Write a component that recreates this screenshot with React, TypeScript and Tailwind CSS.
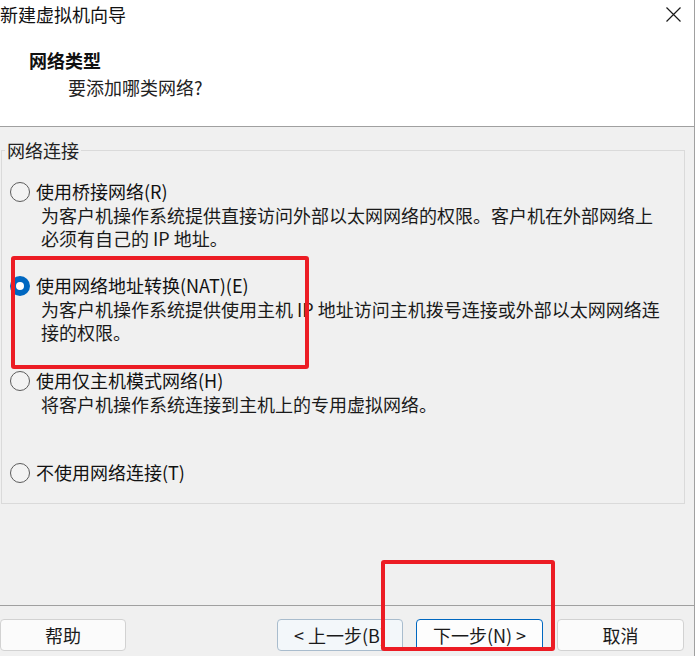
import React from "react";

function Radio({ checked }: { checked?: boolean }) {
  if (checked) {
    return (
      <div className="w-[20px] h-[20px] rounded-full bg-[#0067c0] flex items-center justify-center">
        <div className="w-[8px] h-[8px] rounded-full bg-white" />
      </div>
    );
  }
  return <div className="w-[20px] h-[20px] rounded-full border border-[#5c5c5c] bg-[#f3f3f3]" />;
}

function Option({
  label,
  desc,
  checked,
  className,
}: {
  label: React.ReactNode;
  desc?: string[];
  checked?: boolean;
  className?: string;
}) {
  return (
    <div className={"flex ml-[5px] " + (className ?? "")}>
      <div className="h-[23.5px] flex items-center">
        <Radio checked={checked} />
      </div>
      <div className="ml-[6px]">
        <div className="leading-[23.5px] whitespace-nowrap text-[#111]">{label}</div>
        {desc?.map((d, i) => (
          <div key={i} className="ml-[5px] leading-[23.5px] whitespace-nowrap text-[#1a1a1a]">
            {d}
          </div>
        ))}
      </div>
    </div>
  );
}

function Btn({
  children,
  className,
}: {
  children: React.ReactNode;
  className?: string;
}) {
  return (
    <div
      className={
        "h-[32px] rounded-[4px] border flex items-center justify-center text-[18px] leading-[24px] text-[#1a1a1a] whitespace-nowrap " +
        (className ?? "")
      }
    >
      {children}
    </div>
  );
}

export default function App() {
  return (
    <div className="w-[698px] h-[656px] bg-white relative overflow-hidden font-['Noto_Sans_CJK_SC','Noto_Sans',sans-serif] text-[18px]">
      <div className="w-[695px] h-full border-r border-[#a0a0a0] flex flex-col">
        {/* header */}
        <div className="h-[127px] shrink-0 bg-white border-b border-[#a0a0a0]">
          <div className="flex items-center justify-between h-[28px]">
            <span className="ml-0 leading-[28px] text-[#111]">新建虚拟机向导</span>
            <svg width="15" height="15" viewBox="0 0 15 15" className="mr-[13px]">
              <path d="M0.5 0.5 L14.5 14.5 M14.5 0.5 L0.5 14.5" stroke="#1a1a1a" strokeWidth="1.2" fill="none" />
            </svg>
          </div>
          <div className="ml-[29px] mt-[19.5px] font-bold leading-[24px] text-[#111]">网络类型</div>
          <div className="ml-[68px] mt-[3.5px] leading-[24px] text-[#222]">要添加哪类网络?</div>
        </div>

        {/* content */}
        <div className="flex-1 bg-[#f0f0f0] flex flex-col">
          <fieldset className="mt-[11px] ml-[1px] w-[684px] h-[366px] border border-[#dadada] pl-[3px]">
            <legend className="px-[2px] leading-[24px] text-[#222]">网络连接</legend>
            <Option
              className="mt-[18px]"
              label="使用桥接网络(R)"
              desc={[
                "为客户机操作系统提供直接访问外部以太网网络的权限。客户机在外部网络上",
                "必须有自己的 IP 地址。",
              ]}
            />
            <Option
              className="mt-[23.5px]"
              checked
              label="使用网络地址转换(NAT)(E)"
              desc={[
                "为客户机操作系统提供使用主机 IP 地址访问主机拨号连接或外部以太网网络连",
                "接的权限。",
              ]}
            />
            <Option
              className="mt-[24.5px]"
              label="使用仅主机模式网络(H)"
              desc={["将客户机操作系统连接到主机上的专用虚拟网络。"]}
            />
            <Option className="mt-[45px]" label="不使用网络连接(T)" />
          </fieldset>

          <div className="mt-[101px] h-px bg-[#a0a0a0]" />

          <div className="mt-[13px] flex">
            <Btn className="w-[126px] bg-[#fbfbfb] border-[#d2d2d2]">帮助</Btn>
            <Btn className="ml-[151px] w-[126px] bg-[#f3f7fa] border-[#a9bccd]">&lt; 上一步(B)</Btn>
            <Btn className="ml-[13px] w-[127px] bg-[#fdfdfd] border-[#0067c0]">下一步(N) &gt;</Btn>
            <Btn className="ml-[14px] w-[127px] bg-[#fbfbfb] border-[#d2d2d2]">取消</Btn>
          </div>
        </div>
      </div>

      {/* red highlight overlays */}
      <div className="absolute left-[11px] top-[256px] w-[298px] h-[113px] border-[4px] border-[#ec1c24] rounded-[3px]" />
      <div className="absolute left-[381px] top-[560px] w-[174px] h-[91px] border-[4px] border-[#ec1c24] rounded-[3px]" />
    </div>
  );
}
